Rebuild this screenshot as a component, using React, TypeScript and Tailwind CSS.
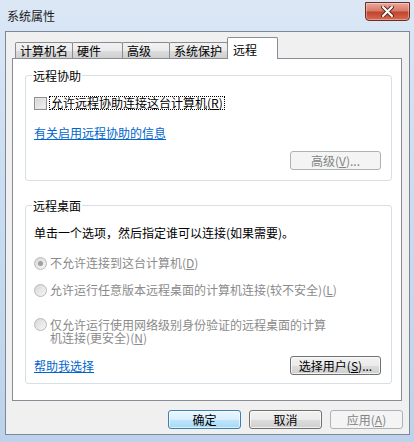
import React from "react";

type Variant = "normal" | "default" | "disabled";

const btnStyles: Record<Variant, string> = {
  normal:
    "border-[#707070] bg-[linear-gradient(180deg,#f2f2f2_0%,#ebebeb_50%,#dddddd_51%,#cfcfcf_100%)] text-black shadow-[inset_0_0_0_1px_rgba(255,255,255,0.7)]",
  default:
    "border-[#3c7fb1] bg-[linear-gradient(180deg,#eaf6fd_0%,#d9f0fc_50%,#bee6fd_51%,#a7d9f5_100%)] text-black shadow-[inset_0_0_0_1px_rgba(255,255,255,0.6)]",
  disabled: "border-[#adb2b5] bg-[#f4f4f4] text-[#838383]",
};

function Btn({
  children,
  variant = "normal",
  className = "",
}: {
  children: React.ReactNode;
  variant?: Variant;
  className?: string;
}) {
  return (
    <div
      className={`h-[19px] flex items-center justify-center rounded-[3px] border leading-[12px] ${btnStyles[variant]} ${className}`}
    >
      {children}
    </div>
  );
}

function Radio({ checked }: { checked?: boolean }) {
  return (
    <div className="w-[13px] h-[13px] shrink-0 rounded-full border border-[#b8b8b8] bg-[linear-gradient(135deg,#d8d8d8,#f6f6f6)] flex items-center justify-center">
      {checked && <div className="w-[5px] h-[5px] rounded-full bg-[#a0a0a0]" />}
    </div>
  );
}

function Key({ k }: { k: string }) {
  return (
    <span>
      (<span className="underline">{k}</span>)
    </span>
  );
}

const tabs = [
  { label: "计算机名", w: "w-[58px]" },
  { label: "硬件", w: "w-[51px]" },
  { label: "高级", w: "w-[48px]" },
  { label: "系统保护", w: "w-[59px]" },
];

export default function App() {
  return (
    <div className="w-[414px] h-[442px] overflow-hidden bg-[linear-gradient(180deg,#dbe7f5_0%,#cddef1_35%,#bdd2ea_100%)] font-['Noto_Sans_CJK_SC','Liberation_Sans',sans-serif] text-[12px] leading-[12px] text-black select-none">
      {/* Title bar */}
      <div className="h-[31px] flex items-start justify-between">
        <div className="pl-[7px] pt-[10px] leading-[12px] text-[#1b1b1b]">系统属性</div>
        <div className="mt-[2px] mr-[4px] w-[45px] h-[19px] rounded-b-[4px] border border-[#6e2b22] bg-[linear-gradient(180deg,#e9a99b_0%,#d77a69_45%,#c2452f_55%,#d66a4f_100%)] shadow-[inset_0_0_0_1px_rgba(255,255,255,0.35)] flex items-center justify-center">
          <svg width="13" height="11" viewBox="0 0 13 11">
            <path
              d="M2 1 L11 10 M11 1 L2 10"
              stroke="#5a2a24"
              strokeWidth="4"
              strokeLinecap="round"
            />
            <path
              d="M2 1 L11 10 M11 1 L2 10"
              stroke="#ffffff"
              strokeWidth="2"
              strokeLinecap="round"
            />
          </svg>
        </div>
      </div>

      {/* Client area */}
      <div className="ml-[5px] w-[405px] h-[404px] border border-[#7a8899] bg-[#f0f0f0] pt-[5px] pl-[6px]">
        {/* Tab strip */}
        <div className="ml-[3px] h-[21px] flex items-end">
          {tabs.map((t) => (
            <div
              key={t.label}
              className={`${t.w} h-[16px] -mr-px border-x border-t border-[#898c95] rounded-t-[2px] bg-[linear-gradient(180deg,#f2f2f2_0%,#ebebeb_50%,#dddddd_51%,#cfcfcf_100%)] flex items-center pl-[4px] leading-[12px]`}
            >
              {t.label}
            </div>
          ))}
          <div className="w-[51px] h-[22px] -mb-px relative z-10 border-x border-t border-[#898c95] rounded-t-[2px] bg-white flex items-start pt-[6px] pl-[5px] leading-[12px]">
            远程
          </div>
        </div>

        {/* Tab panel */}
        <div className="w-[390px] h-[343px] border border-[#898c95] bg-white pt-[16px] pl-[12px]">
          {/* Remote assistance */}
          <div className="w-[367px] border border-[#d5dfe5] rounded-[3px] pb-[10px]">
            <div className="-mt-[7px] ml-[6px] w-fit h-[13px] bg-white px-[1px] leading-[13px]">
              远程协助
            </div>
            <div className="mt-[14px] ml-[8px] h-[14px] flex items-center gap-[2px]">
              <div className="w-[13px] h-[13px] border border-[#8f8f8f] bg-[linear-gradient(135deg,#d4d4d4,#f4f4f4)] shadow-[inset_0_0_0_1px_#e6e6e6]" />
              <div className="border border-dotted border-black px-[1px] leading-[12px]">
                允许远程协助连接这台计算机<Key k="R" />
              </div>
            </div>
            <div className="mt-[16px] ml-[8px] w-fit h-[14px] leading-[14px] text-[#0066cc] underline">
              有关启用远程协助的信息
            </div>
            <div className="mt-[11px] flex justify-end pr-[10px]">
              <Btn variant="disabled" className="w-[91px]">
                高级<Key k="V" />...
              </Btn>
            </div>
          </div>

          {/* Remote desktop */}
          <div className="mt-[24px] w-[367px] border border-[#d5dfe5] rounded-[3px] pb-[8px]">
            <div className="-mt-[7px] ml-[6px] w-fit h-[13px] bg-white px-[1px] leading-[13px]">
              远程桌面
            </div>
            <div className="mt-[14px] ml-[8px] h-[14px] leading-[14px]">
              单击一个选项，然后指定谁可以连接(如果需要)。
            </div>
            <div className="mt-[16px] ml-[8px] h-[14px] flex items-center gap-[3px] text-[#8a8a8a] leading-[14px]">
              <Radio checked />
              <span>
                不允许连接到这台计算机<Key k="D" />
              </span>
            </div>
            <div className="mt-[13px] ml-[8px] h-[14px] flex items-center gap-[3px] text-[#8a8a8a] leading-[14px]">
              <Radio />
              <span>
                允许运行任意版本远程桌面的计算机连接(较不安全)<Key k="L" />
              </span>
            </div>
            <div className="mt-[21px] ml-[8px] flex items-start gap-[3px] text-[#8a8a8a] leading-[13px]">
              <Radio />
              <span className="w-[280px]">
                仅允许运行使用网络级别身份验证的远程桌面的计算机连接(更安全)<Key k="N" />
              </span>
            </div>
            <div className="mt-[12px] ml-[8px] mr-[10px] flex items-center justify-between">
              <span className="leading-[14px] text-[#0066cc] underline">帮助我选择</span>
              <Btn className="w-[91px]">
                选择用户<Key k="S" />...
              </Btn>
            </div>
          </div>
        </div>

        {/* Dialog buttons */}
        <div className="mt-[9px] pr-[6px] flex justify-end gap-[8px]">
          <Btn variant="default" className="w-[73px]">
            确定
          </Btn>
          <Btn className="w-[73px]">取消</Btn>
          <Btn variant="disabled" className="w-[73px]">
            应用<Key k="A" />
          </Btn>
        </div>
      </div>
    </div>
  );
}
